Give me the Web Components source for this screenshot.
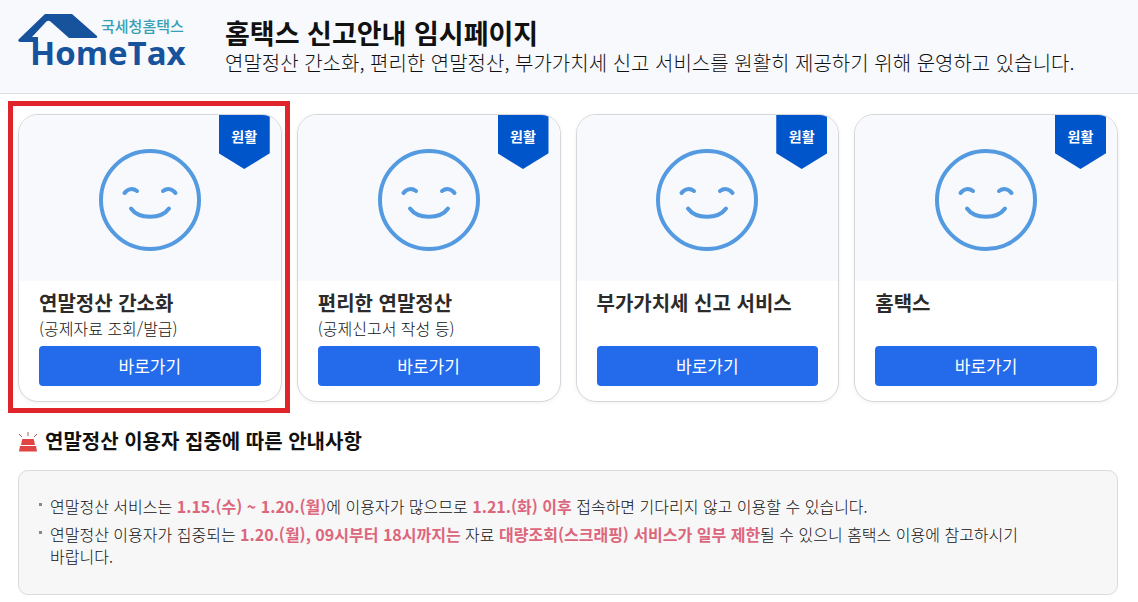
<!DOCTYPE html>
<html lang="ko">
<head>
<meta charset="utf-8">
<meta name="viewport" content="width=device-width, initial-scale=1">
<title>홈택스 신고안내 임시페이지</title>
<style>
  body {
    margin: 0;
    background: #fff;
    color: #111;
    font-family: "Noto Sans CJK KR", sans-serif;
    word-break: keep-all;
  }
</style>
</head>
<body>
<hometax-page></hometax-page>

<template id="page-template">
  <style>
    :host { display: block; }
    main { padding: 20px 20px 7px 18px; }
    .cards {
      display: grid;
      grid-template-columns: repeat(4, minmax(0, 1fr));
      gap: 15px;
      margin-bottom: 24px;
    }
    b { font-weight: 700; color: #dc667c; }
  </style>
  <site-header>
    <span slot="title">홈택스 신고안내 임시페이지</span>
    <span slot="lead">연말정산 간소화, 편리한 연말정산, 부가가치세 신고 서비스를 원활히 제공하기 위해 운영하고 있습니다.</span>
  </site-header>
  <main>
    <div class="cards">
      <service-card highlighted>
        <span slot="status">원활</span>
        <span slot="name">연말정산 간소화</span>
        <span slot="note">(공제자료 조회/발급)</span>
      </service-card>
      <service-card>
        <span slot="status">원활</span>
        <span slot="name">편리한 연말정산</span>
        <span slot="note">(공제신고서 작성 등)</span>
      </service-card>
      <service-card>
        <span slot="status">원활</span>
        <span slot="name">부가가치세 신고 서비스</span>
      </service-card>
      <service-card>
        <span slot="status">원활</span>
        <span slot="name">홈택스</span>
      </service-card>
    </div>
    <notice-panel>
      <span slot="title">연말정산 이용자 집중에 따른 안내사항</span>
      <notice-item>연말정산 서비스는 <b>1.15.(수) ~ 1.20.(월)</b>에 이용자가 많으므로 <b>1.21.(화) 이후</b> 접속하면 기다리지 않고 이용할 수 있습니다.</notice-item>
      <notice-item>연말정산 이용자가 집중되는 <b>1.20.(월), 09시부터 18시까지는</b> 자료 <b>대량조회(스크래핑) 서비스가 일부 제한</b>될 수 있으니 홈택스 이용에 참고하시기 바랍니다.</notice-item>
    </notice-panel>
  </main>
</template>

<template id="logo-template">
  <style>
    :host { display: block; flex: none; }
    svg { display: block; overflow: visible; }
    .ko { font: 500 15px "Noto Sans CJK KR", sans-serif; fill: #35a0b4; }
    .en { font: 700 33px "Open Sans", sans-serif; fill: #17529c; }
  </style>
  <svg width="168" height="62" viewBox="0 0 168 62" role="img" aria-label="국세청홈택스 HomeTax">
    <path d="M27 0H54L79 22Q80 24 77 24H51L33 8Q30 5 27 9L14 23H20V28H2Q-1 27 1 25Z" fill="#17529c"/>
    <text class="ko" x="83" y="18">국세청홈택스</text>
    <text class="en" x="12" y="51">HomeTax</text>
  </svg>
</template>

<template id="header-template">
  <style>
    :host {
      display: flex;
      align-items: flex-start;
      gap: 39px;
      padding: 14px 18px 17px;
      background: #f8f9fd;
      border-bottom: 1px solid #dcdde0;
    }
    .copy { padding-top: 2px; }
    h1 { margin: 0; font-size: 27px; line-height: 34px; font-weight: 700; }
    p { margin: 0; font-size: 20px; line-height: 26px; font-weight: 300; }
  </style>
  <hometax-logo></hometax-logo>
  <div class="copy">
    <h1><slot name="title"></slot></h1>
    <p><slot name="lead"></slot></p>
  </div>
</template>

<template id="face-template">
  <style>
    :host { display: block; }
    svg { display: block; fill: none; stroke: #539ae0; stroke-width: 4; stroke-linecap: round; }
  </style>
  <svg width="102" height="102" viewBox="0 0 102 102" aria-hidden="true">
    <circle cx="51" cy="51" r="49"/>
    <path d="M25.500 44C29 39.500 34 39 38 42M64 42C68 39 73 39.500 76.500 44M32 59.500C40 70.500 62 70.500 70 59.500"/>
  </svg>
</template>

<template id="card-template">
  <style>
    :host { display: block; position: relative; }
    article {
      display: flex;
      flex-direction: column;
      height: 100%;
      box-sizing: border-box;
      overflow: hidden;
      position: relative;
      border: 1px solid #d6d7dc;
      border-radius: 20px;
      background: #fff;
      box-shadow: 0 1px 4px #0000000f;
    }
    .face {
      display: flex;
      justify-content: center;
      padding: 34px 0 30px;
      background: #f8f9fd;
    }
    .status {
      position: absolute;
      top: 0;
      right: 11px;
      width: 51px;
      height: 54px;
      clip-path: polygon(0 0, 100% 0, 100% 71%, 50% 100%, 0 71%);
      background: #0055cb;
      color: #fff;
      font-size: 14px;
      line-height: 42px;
      font-weight: 700;
      text-align: center;
    }
    .body { display: flex; flex-direction: column; padding: 8px 20px 15px; }
    h2 { margin: 0; font-size: 20px; line-height: 28px; font-weight: 700; color: #2b2b2b; }
    p { margin: 0 0 7px; min-height: 22px; font-size: 16px; line-height: 22px; font-weight: 300; color: #111; }
    a {
      border-radius: 4px;
      background: #246beb;
      color: #fff;
      font-size: 17px;
      line-height: 40px;
      text-align: center;
      text-decoration: none;
    }
    :host([highlighted])::after {
      content: "";
      position: absolute;
      inset: -13px -8px -11px -10px;
      border: 5px solid #e0242b;
      pointer-events: none;
    }
  </style>
  <article>
    <div class="face"><smile-face></smile-face></div>
    <div class="status"><slot name="status"></slot></div>
    <div class="body">
      <h2><slot name="name"></slot></h2>
      <p><slot name="note"></slot></p>
      <a href="#">바로가기</a>
    </div>
  </article>
</template>

<template id="panel-template">
  <style>
    :host { display: block; }
    h2 {
      display: flex;
      align-items: center;
      gap: 7px;
      margin: 0 0 14px;
      font-size: 20px;
      line-height: 30px;
      font-weight: 700;
    }
    svg { display: block; }
    .box {
      padding: 24px 56px 21px 20px;
      border: 1px solid #d9dadc;
      border-radius: 10px;
      background: #f7f7f7;
    }
  </style>
  <h2>
    <svg width="20" height="24" viewBox="0 0 20 24" aria-hidden="true">
      <path d="M4 11Q4 10 5 10H15Q16 10 16 11L17 16H3ZM2 17H18L19 22.500H1Z" fill="#e04444"/>
      <path d="M1 5L4 8M10 3V7M19 5L16 8" stroke="#a85c5c" fill="none"/>
    </svg>
    <slot name="title"></slot>
  </h2>
  <div class="box" role="list"><slot></slot></div>
</template>

<template id="item-template">
  <style>
    :host {
      display: flex;
      gap: 8px;
      margin-bottom: 6px;
      font-size: 16px;
      line-height: 22px;
      font-weight: 300;
      color: #111;
    }
    .dot { flex: none; width: 3px; height: 3px; margin-top: 8px; background: #888; }
  </style>
  <span class="dot"></span>
  <div><slot></slot></div>
</template>

<script>
  class TemplateElement extends HTMLElement {
    constructor() {
      super();
      const template = document.getElementById(this.constructor.template);
      this.attachShadow({ mode: "open" }).append(template.content.cloneNode(true));
    }
  }
  class HometaxLogo extends TemplateElement { static template = "logo-template"; }
  class SiteHeader extends TemplateElement { static template = "header-template"; }
  class SmileFace extends TemplateElement { static template = "face-template"; }
  class ServiceCard extends TemplateElement { static template = "card-template"; }
  class NoticePanel extends TemplateElement { static template = "panel-template"; }
  class NoticeItem extends TemplateElement {
    static template = "item-template";
    connectedCallback() { this.setAttribute("role", "listitem"); }
  }
  class HometaxPage extends TemplateElement { static template = "page-template"; }

  customElements.define("hometax-logo", HometaxLogo);
  customElements.define("site-header", SiteHeader);
  customElements.define("smile-face", SmileFace);
  customElements.define("service-card", ServiceCard);
  customElements.define("notice-item", NoticeItem);
  customElements.define("notice-panel", NoticePanel);
  customElements.define("hometax-page", HometaxPage);
</script>
</body>
</html>
